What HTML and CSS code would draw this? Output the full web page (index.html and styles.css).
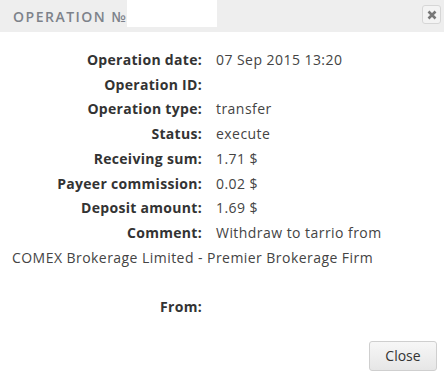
FILE: index.html
```html
<!DOCTYPE html>
<html>
<head>
<meta charset="utf-8">
<link rel="stylesheet" href="styles.css">
</head>
<body>
<div class="modal">
  <div class="modal-header">
    <span class="title">OPERATION №</span>
    <span class="redact"></span>
    <button class="x-btn" aria-label="close">
      <svg width="10" height="10" viewBox="0 0 10 10"><path d="M1.5 1.5 L8.5 8.5 M8.5 1.5 L1.5 8.5" stroke="#777" stroke-width="2.6" stroke-linecap="butt"/></svg>
    </button>
  </div>
  <div class="modal-body">
    <div class="row"><span class="label">Operation date:</span>07 Sep 2015 13:20</div>
    <div class="row"><span class="label">Operation ID:</span></div>
    <div class="row"><span class="label">Operation type:</span>transfer</div>
    <div class="row"><span class="label">Status:</span>execute</div>
    <div class="row"><span class="label">Receiving sum:</span>1.71 $</div>
    <div class="row"><span class="label">Payeer commission:</span>0.02 $</div>
    <div class="row"><span class="label">Deposit amount:</span>1.69 $</div>
    <div class="row"><span class="label">Comment:</span>Withdraw to tarrio from COMEX Brokerage Limited - Premier Brokerage Firm</div>
    <div class="row blank"></div>
    <div class="row"><span class="label">From:</span></div>
  </div>
  <div class="modal-footer">
    <button class="btn">Close</button>
  </div>
</div>
</body>
</html>
```
FILE: styles.css
```css
html, body {
  margin: 0;
  padding: 0;
  background: #fff;
}
body {
  font-family: "Open Sans", Lato, sans-serif;
  color: #444;
  width: 444px;
  height: 381px;
  overflow: hidden;
}
.modal {
  position: relative;
}
.modal-header {
  position: relative;
  height: 32px;
  background: #eeeeee;
  display: flex;
  align-items: center;
  padding: 0 13px;
}
.title {
  font-size: 14px;
  font-weight: 600;
  letter-spacing: 1.5px;
  color: #7d828a;
  padding-top: 1px;
}
.redact {
  position: absolute;
  left: 127px;
  top: 0;
  width: 90px;
  height: 27px;
  background: #fff;
}
.x-btn {
  position: absolute;
  left: 422px;
  top: 5px;
  width: 19px;
  height: 19px;
  padding: 0;
  border: 1px solid #d6d6d6;
  border-radius: 3px;
  background: #f3f3f3;
  display: flex;
  align-items: center;
  justify-content: center;
}
.modal-body {
  padding: 16px 16px 0 12px;
  font-size: 14px;
  line-height: 24.7px;
}
.row {
  clear: both;
  min-height: 24.7px;
  letter-spacing: 0.45px;
}
.label {
  float: left;
  width: 190px;
  margin-right: 14px;
  text-align: right;
  font-weight: 700;
  letter-spacing: 0.3px;
  color: #333;
}
.modal-footer {
  display: flex;
  justify-content: flex-end;
  padding: 21px 7px 0 0;
}
.btn {
  width: 68px;
  height: 30px;
  font-family: "Open Sans", Lato, sans-serif;
  font-size: 14px;
  color: #333;
  border: 1px solid #cfcfcf;
  border-radius: 3px;
  background: linear-gradient(#f7f7f7, #e6e6e6);
  padding: 0;
}
```
